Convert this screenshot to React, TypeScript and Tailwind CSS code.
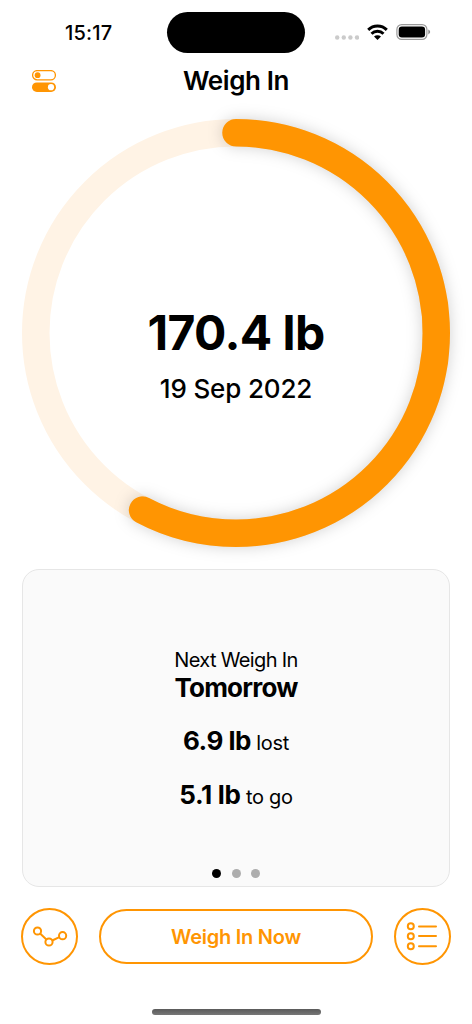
const ORANGE = "#ff9502";
const RADIUS = 200.25;
const CIRCUMFERENCE = 2 * Math.PI * RADIUS;

const StatusBar = () => {
  return (
    <div className="grid h-[65px] grid-cols-[167px_138px_1fr] items-center">
      <span className="pl-[65px] text-[20px] leading-5 font-medium tracking-[0.2px]">
        15:17
      </span>
      <div className="h-[41px] rounded-full bg-black" />
      <div className="flex items-center pl-[30px]">
        <svg width="24" height="6" viewBox="0 0 24 6" className="mt-[10px]" fill="#cbcbcb">
          <circle cx="2.2" cy="2.5" r="2.2" />
          <circle cx="8.8" cy="2.5" r="2.2" />
          <circle cx="15.4" cy="2.5" r="2.2" />
          <circle cx="22" cy="2.5" r="2.2" />
        </svg>
        <svg width="21" height="16" viewBox="0 0 21 16" className="-mt-[2px] ml-2" fill="none" stroke="#000" strokeWidth="2.9">
          <path d="M1.2 5.9a13.2 13.2 0 0 1 18.6 0" />
          <path d="M4.5 9.8a8.4 8.4 0 0 1 12 0" />
          <path d="M10.5 16 7 12.6a5 5 0 0 1 7 0z" fill="#000" stroke="none" />
        </svg>
        <svg width="36" height="16" viewBox="0 0 36 16" className="-mt-[2px] ml-2">
          <rect x="0.9" y="0.6" width="30" height="14.8" rx="4.8" fill="none" stroke="#9a9a9a" strokeWidth="1.2" />
          <rect x="2.7" y="2.5" width="26.4" height="11" rx="3.2" fill="#000" />
          <path d="M32.3 5.6c2.4.9 2.4 3.9 0 4.8z" fill="#8a8a8a" />
        </svg>
      </div>
    </div>
  );
};

const Header = () => {
  return (
    <header className="grid h-8 grid-cols-[1fr_auto_1fr] items-center px-8">
      <button aria-label="Settings">
        <svg width="24" height="23" viewBox="0 0 24 23">
          <rect x="0.6" y="0.6" width="22.8" height="9.2" rx="4.6" fill="none" stroke={ORANGE} strokeWidth="1.3" />
          <circle cx="5.6" cy="5.2" r="2.9" fill={ORANGE} />
          <rect x="0" y="12.4" width="24" height="9.6" rx="4.8" fill={ORANGE} />
          <circle cx="19" cy="17.2" r="3.1" fill="#fff" />
        </svg>
      </button>
      <h1 className="text-[26px] leading-8 font-semibold tracking-[-0.4px]">Weigh In</h1>
    </header>
  );
};

const ProgressRing = ({ progress }: { progress: number }) => {
  return (
    <section className="relative mx-auto mt-[22px] h-[428px] w-[428px]">
      <svg
        viewBox="0 0 428 428"
        className="absolute inset-0 overflow-visible"
        fill="none"
        strokeWidth="27.5"
      >
        <defs>
          <filter id="ring-shadow" x="-10%" y="-10%" width="120%" height="120%" colorInterpolationFilters="sRGB">
            <feDropShadow dx="0" dy="0" stdDeviation="7.5" floodColor="#000" floodOpacity="0.18" />
          </filter>
        </defs>
        <circle cx="214" cy="214" r={RADIUS} stroke="#fff3e5" />
        <circle
          cx="214"
          cy="214"
          r={RADIUS}
          stroke={ORANGE}
          strokeLinecap="round"
          strokeDasharray={`${CIRCUMFERENCE * progress} ${CIRCUMFERENCE}`}
          transform="rotate(-90 214 214)"
          filter="url(#ring-shadow)"
        />
      </svg>
      <div className="relative flex flex-col items-center pt-[184px]">
        <p className="text-[48px] leading-[60px] font-bold tracking-[-0.6px]">170.4 lb</p>
        <p className="mt-[10px] text-[26px] leading-8 font-medium tracking-[-0.15px]">19 Sep 2022</p>
      </div>
    </section>
  );
};

const SummaryCard = () => {
  return (
    <section className="mx-[22px] mt-[22px] flex h-[318px] flex-col items-center rounded-[17px] border border-[#e6e6e6] bg-[#fafafa] pt-[78px]">
      <p className="text-[20px] leading-6 tracking-[-0.65px]">Next Weigh In</p>
      <p className="text-[26px] leading-8 font-bold tracking-[-0.8px]">Tomorrow</p>
      <p className="mt-[21px] text-[20px] leading-8 tracking-[-0.3px]">
        <b className="text-[26px] font-bold tracking-[-0.5px]">6.9 lb</b> lost
      </p>
      <p className="mt-5 text-[20px] leading-8 tracking-[-0.3px]">
        <b className="text-[26px] font-bold">5.1 lb</b> to go
      </p>
      <div className="mt-auto mb-[8px] flex gap-[10.5px]">
        <span className="size-[9px] rounded-full bg-black" />
        <span className="size-[9px] rounded-full bg-[#adadad]" />
        <span className="size-[9px] rounded-full bg-[#adadad]" />
      </div>
    </section>
  );
};

const ActionBar = () => {
  return (
    <nav className="mx-[21px] mt-[21px] flex items-center justify-between text-[#ff9502]">
      <button aria-label="Chart" className="size-[57px] rounded-full border-2 border-current">
        <svg viewBox="0 0 53 53" fill="none" stroke="currentColor" strokeWidth="2">
          <circle cx="14.5" cy="21" r="3.6" />
          <circle cx="26" cy="32" r="3.6" />
          <circle cx="39.6" cy="25.7" r="3.6" />
          <path d="m17.1 23.5 6.3 6M29.3 30.5l7-3.3" />
        </svg>
      </button>
      <button className="h-[55px] w-[274px] rounded-full border-2 border-current text-[20px] leading-6 font-semibold tracking-[-0.25px]">
        Weigh In Now
      </button>
      <button aria-label="History" className="size-[57px] rounded-full border-2 border-current">
        <svg viewBox="0 0 53 53" fill="none" stroke="currentColor" strokeWidth="2" strokeLinecap="round">
          <circle cx="14.8" cy="16.3" r="3" />
          <circle cx="14.8" cy="26.3" r="3" />
          <circle cx="14.8" cy="36.2" r="3" />
          <path d="M23 16.5h17M23 26h17M23 36.2h17" />
        </svg>
      </button>
    </nav>
  );
};

export default function App() {
  return (
    <main className="flex h-[1024px] w-[472px] flex-col overflow-hidden bg-white font-['Inter',sans-serif] text-black">
      <StatusBar />
      <Header />
      <ProgressRing progress={0.577} />
      <SummaryCard />
      <ActionBar />
      <div className="mx-auto mt-auto mb-[9px] h-[6px] w-[169px] rounded-full bg-linear-to-b from-[#5a5a5a] to-[#777]" />
    </main>
  );
}
